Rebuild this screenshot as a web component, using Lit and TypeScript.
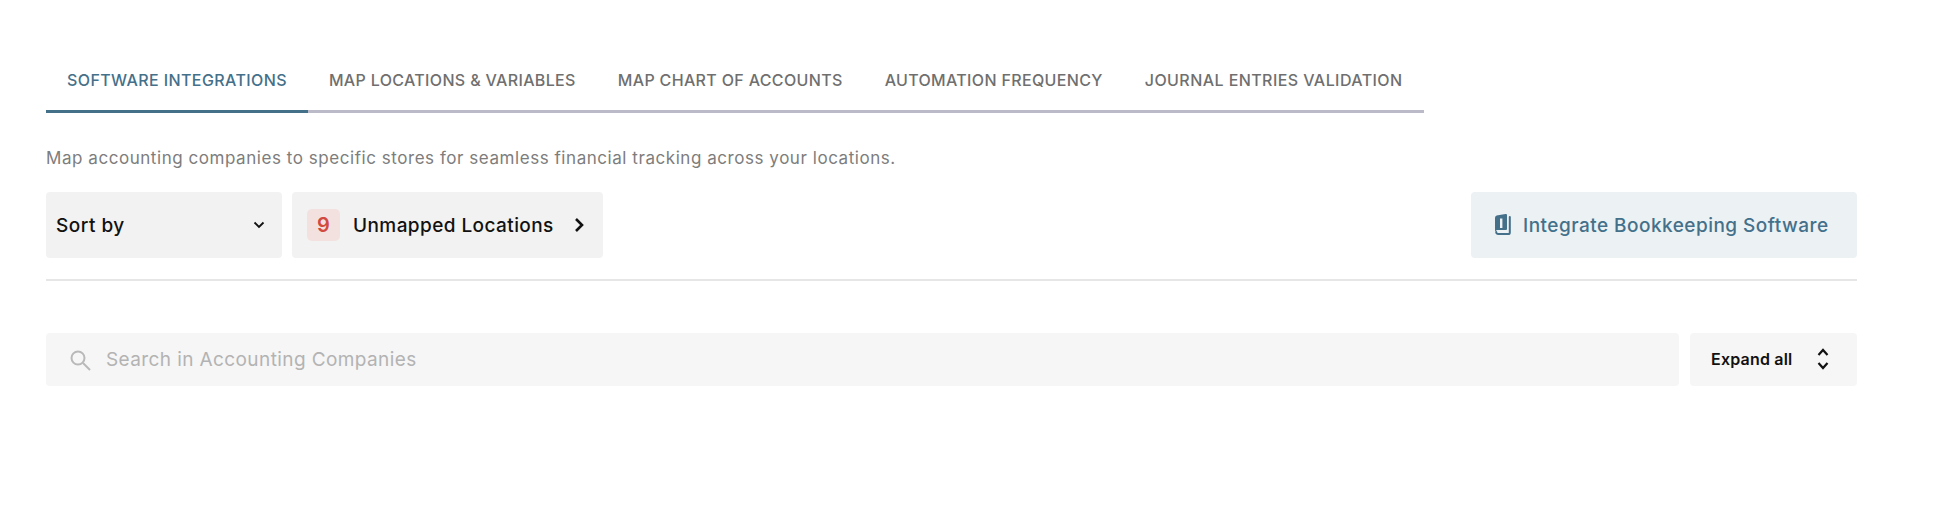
import { LitElement, html, css } from "lit";
import { customElement } from "lit/decorators.js";

@customElement("app-root")
export class AppRoot extends LitElement {
  static styles = css`
    :host { display: block; font-family: "Inter", "Noto Sans", sans-serif; background: #fff; height: 532px; box-sizing: border-box; padding: 59px 89px 0 46px; }
    .tabs { display: flex; width: 1378px; border-bottom: 3px solid #babac8; height: 51px; box-sizing: content-box; }
    .tab { padding: 10px 21px 0; height: 41px; margin-bottom: -3px; border-bottom: 3px solid transparent; font-size: 16px; line-height: 22px; font-weight: 500; color: #6f6f6f; letter-spacing: 0.34px; white-space: nowrap; box-sizing: content-box; }
    .tab.active { color: #44708a; border-bottom-color: #44708a; letter-spacing: 0.4px; }
    .tab:last-child { letter-spacing: 0.43px; }
    .desc { margin-top: 34px; font-size: 17px; line-height: 22px; letter-spacing: 0.55px; color: #7d7d7d; }
    .row { display: flex; gap: 10px; margin-top: 23px; height: 66px; }
    .box { background: #f2f2f2; border-radius: 4px; display: flex; align-items: center; box-sizing: border-box; }
    .sort { width: 236px; padding: 0 17px 0 10px; justify-content: space-between; font-size: 19px; letter-spacing: 0.5px; font-weight: 500; color: #111; }
    .unmapped { width: 311px; padding: 0 19px 0 15px; font-size: 19px; letter-spacing: 0.42px; font-weight: 500; color: #111; }
    .badge { width: 33px; height: 32px; border-radius: 5px; background: #f3e1df; color: #d1493f; font-size: 20px; font-weight: 600; display: flex; align-items: center; justify-content: center; margin-right: 13px; }
    .unmapped span.t { flex: 1; }
    .spacer { flex: 1; }
    .integrate { width: 386px; background: #ecf1f4; color: #44708a; font-size: 19px; letter-spacing: 0.47px; font-weight: 500; padding: 0 23px 0 24px; gap: 11px; }
    hr { border: 0; border-top: 2px solid #e6e6e6; margin: 21px 0 0; }
    .searchrow { display: flex; gap: 11px; margin-top: 52px; height: 53px; }
    .search { flex: 1; background: #f6f6f6; border-radius: 4px; display: flex; align-items: center; padding: 0 24px 0 23px; gap: 15px; color: #b3b3b3; font-size: 19px; letter-spacing: 0.4px; }
    .expand { width: 167px; background: #f6f6f6; border-radius: 4px; display: flex; align-items: center; justify-content: space-between; box-sizing: border-box; padding: 0 28px 2px 21px; font-size: 16px; letter-spacing: 0.2px; font-weight: 600; color: #111; }
    svg { display: block; flex: none; }
  `;

  render() {
    const tabs = ["SOFTWARE INTEGRATIONS", "MAP LOCATIONS & VARIABLES", "MAP CHART OF ACCOUNTS", "AUTOMATION FREQUENCY", "JOURNAL ENTRIES VALIDATION"];
    return html`
      <div class="tabs">
        ${tabs.map((t, i) => html`<div class="tab ${i === 0 ? "active" : ""}">${t}</div>`)}
      </div>
      <div class="desc">Map accounting companies to specific stores for seamless financial tracking across your locations.</div>
      <div class="row">
        <div class="box sort">
          <span>Sort by</span>
          <svg width="12" height="8" viewBox="0 0 12 8" fill="none" stroke="#111" stroke-width="1.8"><path d="M1.5 1.5 6 6l4.5-4.5"/></svg>
        </div>
        <div class="box unmapped">
          <div class="badge">9</div>
          <span class="t">Unmapped Locations</span>
          <svg width="10" height="16" viewBox="0 0 10 16" fill="none" stroke="#111" stroke-width="2.6"><path d="M2 2l6 6-6 6"/></svg>
        </div>
        <div class="spacer"></div>
        <div class="box integrate">
          <svg width="17" height="22" viewBox="0 0 17 22" fill="none"><path d="M3 1.2 10.5.1A1.2 1.2 0 0 1 12 1.3V15a1 1 0 0 1-1 1H3a3 3 0 0 0-3 1.5V4a3 3 0 0 1 3-2.8z" fill="#44708a"/><path d="M5 4.5h2.4V14H5z" fill="#ecf1f4"/><path d="M14.8 3v15.5a1.6 1.6 0 0 1-1.6 1.6H3.4a2 2 0 0 1-2.2-2" stroke="#44708a" stroke-width="2" stroke-linecap="round"/></svg>
          <span>Integrate Bookkeeping Software</span>
        </div>
      </div>
      <hr />
      <div class="searchrow">
        <div class="search">
          <svg width="22" height="22" viewBox="0 0 22 22" fill="none" stroke="#b9b9b9" stroke-width="2"><circle cx="9" cy="9" r="6.5"/><path d="M14 14l7 7"/></svg>
          <span>Search in Accounting Companies</span>
        </div>
        <div class="expand">
          <span>Expand all</span>
          <svg width="12" height="22" viewBox="0 0 12 22" fill="none" stroke="#111" stroke-width="2.2"><path d="M1.5 7 6 2l4.5 5M1.5 15 6 20l4.5-5"/></svg>
        </div>
      </div>
    `;
  }
}
